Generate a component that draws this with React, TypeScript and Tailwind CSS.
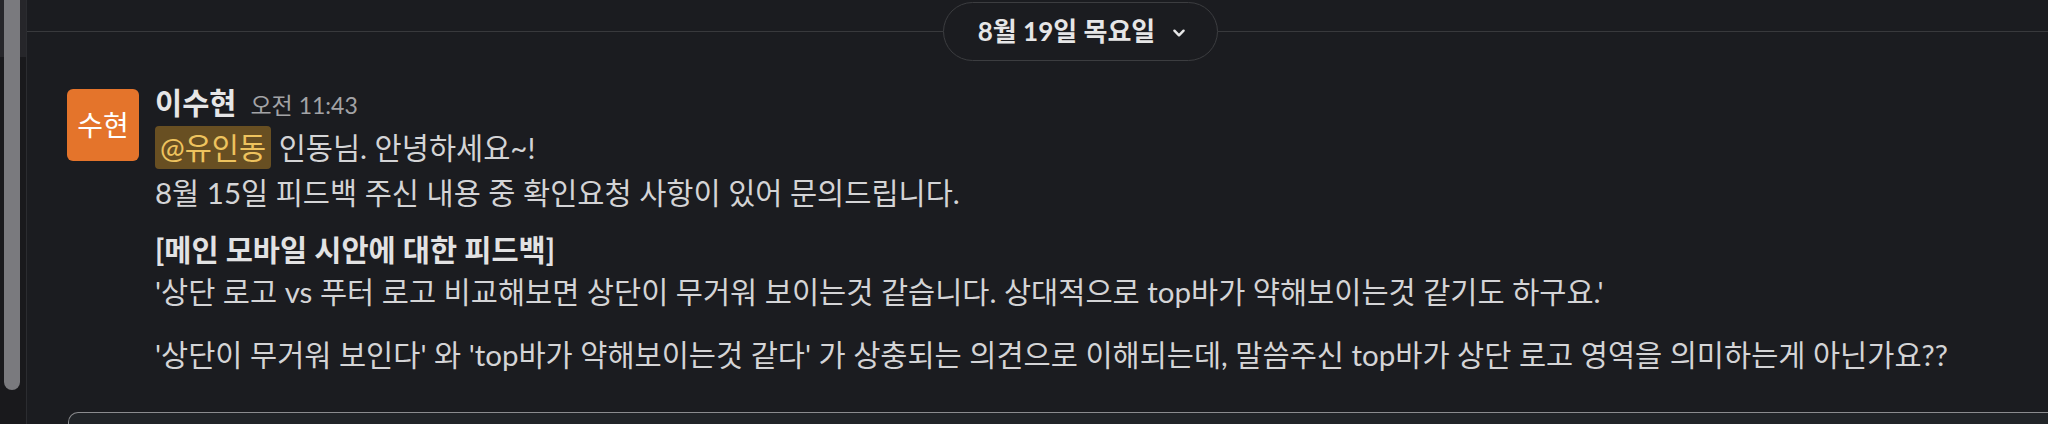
import React from 'react';

const FONT = "font-['Lato','Noto_Sans_CJK_KR',sans-serif]";

const DateDivider = () => (
  <div className="flex items-center pt-[2px]">
    <div className="h-px flex-1 bg-[#38393c]" />
    <button className="flex h-[59px] items-center justify-center gap-[16px] rounded-full border border-[#3c3d40] bg-[#1b1c20] pl-[34px] pr-[30px] text-[26px] font-bold text-[#e6e6e7]">
      <span>8월 19일 목요일</span>
      <svg width="16" height="16" viewBox="0 0 14 14" className="mt-[2px]">
        <path d="M3 5l4 4 4-4" fill="none" stroke="#e6e6e7" strokeWidth="2.2" strokeLinecap="round" strokeLinejoin="round" />
      </svg>
    </button>
    <div className="h-px flex-1 bg-[#38393c]" />
  </div>
);

const Message = () => (
  <div className="mt-[28px] flex gap-[16px] pl-[40px]">
    <div className="flex h-[72px] w-[72px] shrink-0 items-center justify-center rounded-[6px] bg-[#e4742b] text-[28px] text-white">
      수현
    </div>
    <div className="flex flex-col text-[29.5px] leading-[44px] text-[#d4d4d6]">
      <div className="-mt-[8px] flex items-baseline gap-[14px]">
        <span className="font-bold text-[#e6e6e7]">이수현</span>
        <span className="text-[23px] text-[#a3a3a6]">오전 11:43</span>
      </div>
      <div className="-mt-[1px]">
        <span className="rounded-[4px] bg-[#684f22] px-[5px] py-[4px] text-[#eec35e]">@유인동</span>
        <span> 인동님. 안녕하세요~!</span>
      </div>
      <div className="mt-[1px]">8월 15일 피드백 주신 내용 중 확인요청 사항이 있어 문의드립니다.</div>
      <div className="mt-[13px] font-bold text-[#e2e2e3]">[메인 모바일 시안에 대한 피드백]</div>
      <div className="-mt-[2px]">'상단 로고 vs 푸터 로고 비교해보면 상단이 무거워 보이는것 같습니다. 상대적으로 top바가 약해보이는것 같기도 하구요.'</div>
      <div className="mt-[19px]">'상단이 무거워 보인다' 와 'top바가 약해보이는것 같다' 가 상충되는 의견으로 이해되는데, 말씀주신 top바가 상단 로고 영역을 의미하는게 아닌가요??</div>
    </div>
  </div>
);

export default function App() {
  return (
    <div className={`flex h-[424px] w-[2048px] overflow-hidden bg-[#1b1c20] ${FONT}`}>
      {/* left scroll strip */}
      <div className="flex w-[27px] shrink-0 flex-col border-r border-[#2b2c30] bg-[#19191c]">
        <div className="relative h-full">
          <div className="absolute left-0 top-0 h-[57px] w-[26px] bg-[#26262a]" />
          <div className="absolute left-[4px] top-0 h-[390px] w-[16px] rounded-b-full bg-[#7a7a7e]" />
        </div>
      </div>

      {/* main column runs past the right edge of the window */}
      <div className="-mr-[86px] flex min-w-0 flex-1 flex-col">
        <DateDivider />
        <Message />
        <div className="mt-auto ml-[41px] mr-[20px] h-[12px] shrink-0 rounded-t-[10px] border border-b-0 border-[#8b8c8f] bg-[#212428]" />
      </div>
    </div>
  );
}
